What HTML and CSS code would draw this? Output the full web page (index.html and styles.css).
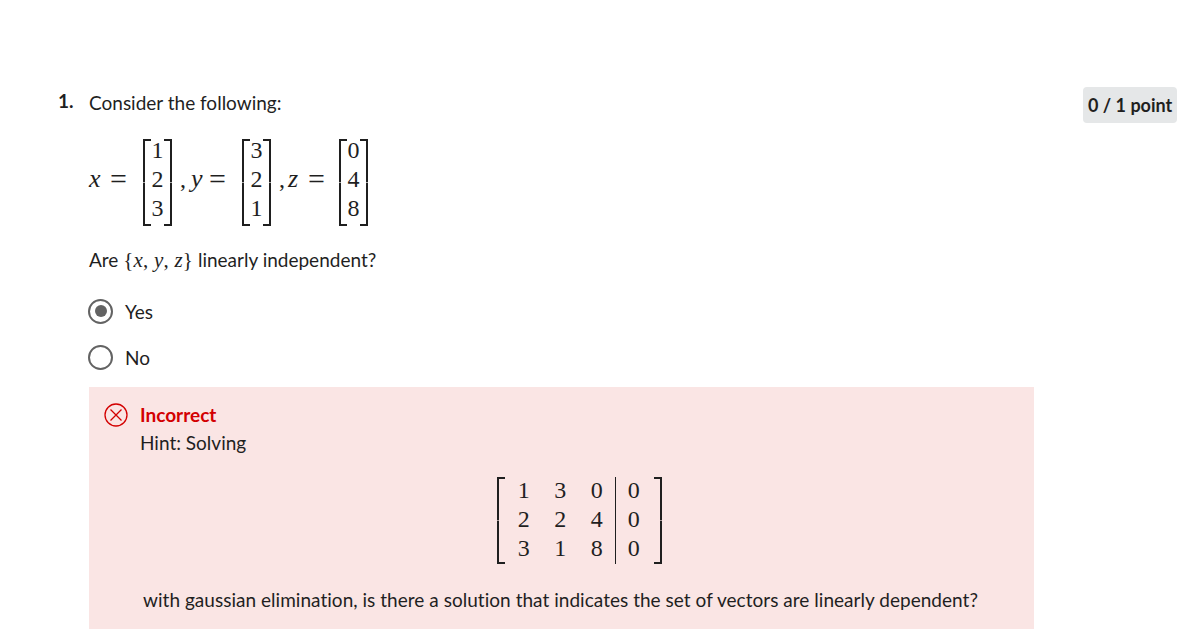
FILE: index.html
```html
<!DOCTYPE html>
<html lang="en">
<head>
    <meta charset="UTF-8">
    <title>Quiz</title>
    <link rel="stylesheet" href="styles.css">
</head>
<body>
    <div class="question">
        <div class="q-num">1.</div>
        <div class="q-body">
            <p class="q-text">Consider the following:</p>
            <div class="vectors">
                <i class="var var-x">x</i><span class="eq">=</span>
                <div class="vec"><span>1</span><span>2</span><span>3</span></div>
                <span class="comma">,</span><i class="var var-y">y</i><span class="eq">=</span>
                <div class="vec"><span>3</span><span>2</span><span>1</span></div>
                <span class="comma">,</span><i class="var var-z">z</i><span class="eq">=</span>
                <div class="vec vec-last"><span>0</span><span>4</span><span>8</span></div>
            </div>
            <p class="q-ask">Are <span class="math">{<i>x</i>, <i>y</i>, <i>z</i>}</span> linearly independent?</p>

            <label class="option">
                <span class="radio checked"></span>
                <span>Yes</span>
            </label>
            <label class="option">
                <span class="radio"></span>
                <span>No</span>
            </label>

            <div class="feedback">
                <div class="fb-head">
                    <svg class="fb-icon" width="24" height="24" viewBox="0 0 24 24" fill="none" stroke="#d30001" stroke-width="1.3">
                        <circle cx="12" cy="12" r="11"/>
                        <path d="M6.5 6.5L17.5 17.5M17.5 6.5L6.5 17.5"/>
                    </svg>
                    <div>
                        <div class="fb-title">Incorrect</div>
                        <div>Hint: Solving</div>
                    </div>
                </div>
                <div class="aug-wrap">
                    <div class="aug">
                        <span>1</span><span>3</span><span>0</span><span class="bar">0</span>
                        <span>2</span><span>2</span><span>4</span><span class="bar">0</span>
                        <span>3</span><span>1</span><span>8</span><span class="bar">0</span>
                    </div>
                </div>
                <p class="fb-last">with gaussian elimination, is there a solution that indicates the set of vectors are linearly dependent?</p>
            </div>
        </div>
        <div class="points">0 / 1 point</div>
    </div>
</body>
</html>
```

FILE: styles.css
```css
html, body {
    height: 100%;
    overflow: hidden;
}

body {
    margin: 0;
    background: #fff;
    color: #1f1f1f;
    font-family: "Lato", sans-serif;
    font-size: 19px;
}

p {
    margin: 0;
}

.question {
    display: flex;
    align-items: flex-start;
    padding: 87px 25px 0 58px;
}

.q-num {
    width: 31px;
    flex-shrink: 0;
    font-weight: 700;
    font-size: 19px;
    line-height: 27px;
}

.q-body {
    width: 945px;
    flex-shrink: 0;
}

.q-text {
    line-height: 32px;
}

.vectors {
    display: flex;
    align-items: center;
    margin-top: 15px;
    height: 90px;
    font-family: "Liberation Serif", serif;
    font-size: 24px;
}

.var {
    font-size: 26px;
    line-height: 30px;
}

.var-x {
    width: 21px;
}

.var-y {
    width: 18px;
}

.var-z {
    width: 20px;
    margin-left: -2px;
}

.eq {
    width: 33px;
    font-size: 30px;
    line-height: 30px;
}

.comma {
    width: 11px;
    margin-left: 8px;
    line-height: 30px;
}

/* brackets are drawn on the pseudo elements */
.vec {
    display: flex;
    flex-direction: column;
    align-items: center;
    justify-content: center;
    position: relative;
    align-self: flex-start;
    box-sizing: border-box;
    width: 29px;
    height: 87px;
    margin-top: 5px;
    padding-bottom: 6px;
    line-height: 29px;
}

.vec-last {
    margin-left: -2px;
}

.vec::before,
.vec::after,
.aug::before,
.aug::after {
    content: "";
    position: absolute;
    top: 0;
    bottom: 0;
    width: 6px;
    border: 2px solid #1f1f1f;
    -webkit-mask-image: linear-gradient(#000 49%, rgba(0, 0, 0, 0.4) 49%, rgba(0, 0, 0, 0.4) 51%, #000 51%);
    mask-image: linear-gradient(#000 49%, rgba(0, 0, 0, 0.4) 49%, rgba(0, 0, 0, 0.4) 51%, #000 51%);
}

.vec::before,
.aug::before {
    left: 0;
    border-right: none;
}

.vec::after,
.aug::after {
    right: 0;
    border-left: none;
}

.q-ask {
    margin-top: 20px;
    line-height: 32px;
}

.math {
    font-family: "Liberation Serif", serif;
    font-size: 21px;
    letter-spacing: 0.2px;
}

.option {
    display: flex;
    align-items: center;
    gap: 12px;
    height: 46px;
    font-size: 19px;
}

.q-ask + .option {
    margin-top: 12px;
}

.radio {
    width: 25px;
    height: 25px;
    margin-left: -1px;
    box-sizing: border-box;
    border: 2.5px solid #636363;
    border-radius: 50%;
    display: flex;
    align-items: center;
    justify-content: center;
}

.radio.checked::after {
    content: "";
    width: 12px;
    height: 12px;
    border-radius: 50%;
    background: #636363;
}

.feedback {
    margin-top: 7px;
    background: #fae5e4;
    padding: 14px 16px 0;
    height: 242px;
    box-sizing: border-box;
}

.fb-head {
    display: flex;
    gap: 12px;
    line-height: 28px;
}

.fb-icon {
    flex-shrink: 0;
    margin: 2px 0 0 -1px;
}

.fb-title {
    color: #d30001;
    font-weight: 700;
}

.aug-wrap {
    display: flex;
    margin-top: 20px;
    padding-left: 392px;
}

.aug {
    position: relative;
    display: grid;
    grid-template-columns: repeat(4, 36.5px);
    grid-auto-rows: 29px;
    padding: 0 10.5px 0 8.5px;
    height: 87px;
    font-family: "Liberation Serif", serif;
    font-size: 24px;
    line-height: 27px;
    text-align: center;
}

.aug .bar {
    border-left: 1px solid #1f1f1f;
}

.fb-last {
    margin-top: 24px;
    padding-left: 38px;
    letter-spacing: 0.03px;
}

.points {
    margin-left: 49px;
    padding: 0 5px;
    height: 36px;
    line-height: 36px;
    background: #e5e7e8;
    border-radius: 4px;
    font-weight: 700;
    font-size: 18px;
    white-space: nowrap;
}
```
